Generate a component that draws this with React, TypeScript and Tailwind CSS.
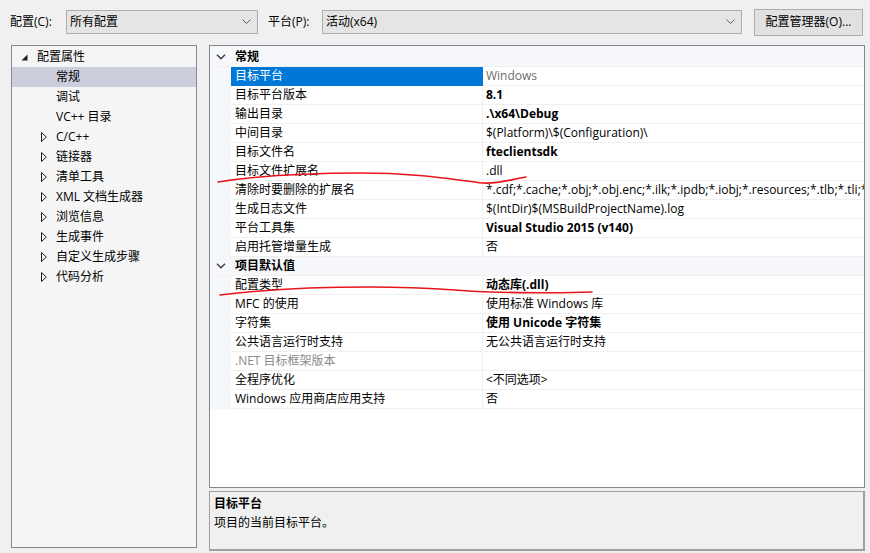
import React from "react";

const FONT = { fontFamily: '"Open Sans", "Noto Sans CJK SC", sans-serif' };

type Row = { name: string; value: string; bold?: boolean; grayValue?: boolean; grayName?: boolean; selected?: boolean };

const general: Row[] = [
  { name: "目标平台", value: "Windows", grayValue: true, selected: true },
  { name: "目标平台版本", value: "8.1", bold: true },
  { name: "输出目录", value: ".\\x64\\Debug", bold: true },
  { name: "中间目录", value: "$(Platform)\\$(Configuration)\\" },
  { name: "目标文件名", value: "fteclientsdk", bold: true },
  { name: "目标文件扩展名", value: ".dll" },
  { name: "清除时要删除的扩展名", value: "*.cdf;*.cache;*.obj;*.obj.enc;*.ilk;*.ipdb;*.iobj;*.resources;*.tlb;*.tli;*.tlh;*.tmp;*.rsp;*.pgc;*.pgd" },
  { name: "生成日志文件", value: "$(IntDir)$(MSBuildProjectName).log" },
  { name: "平台工具集", value: "Visual Studio 2015 (v140)", bold: true },
  { name: "启用托管增量生成", value: "否" },
];

const defaults: Row[] = [
  { name: "配置类型", value: "动态库(.dll)", bold: true },
  { name: "MFC 的使用", value: "使用标准 Windows 库" },
  { name: "字符集", value: "使用 Unicode 字符集", bold: true },
  { name: "公共语言运行时支持", value: "无公共语言运行时支持" },
  { name: ".NET 目标框架版本", value: "", grayName: true },
  { name: "全程序优化", value: "<不同选项>" },
  { name: "Windows 应用商店应用支持", value: "否" },
];

const tree: { label: string; indent: number; kind: "open" | "closed" | "none"; selected?: boolean }[] = [
  { label: "配置属性", indent: 0, kind: "open" },
  { label: "常规", indent: 1, kind: "none", selected: true },
  { label: "调试", indent: 1, kind: "none" },
  { label: "VC++ 目录", indent: 1, kind: "none" },
  { label: "C/C++", indent: 1, kind: "closed" },
  { label: "链接器", indent: 1, kind: "closed" },
  { label: "清单工具", indent: 1, kind: "closed" },
  { label: "XML 文档生成器", indent: 1, kind: "closed" },
  { label: "浏览信息", indent: 1, kind: "closed" },
  { label: "生成事件", indent: 1, kind: "closed" },
  { label: "自定义生成步骤", indent: 1, kind: "closed" },
  { label: "代码分析", indent: 1, kind: "closed" },
];

function Chevron() {
  return (
    <svg width="9" height="6" viewBox="0 0 9 6" className="shrink-0">
      <polyline points="0.5,0.5 4.5,4.5 8.5,0.5" fill="none" stroke="#606060" strokeWidth="1" />
    </svg>
  );
}

function Combo({ text, width }: { text: string; width: string }) {
  return (
    <div className={`${width} h-[24px] flex items-center justify-between bg-[#e5e5e5] border border-[#adadad] pl-[3px] pr-[6px] text-[12px] text-black`}>
      <span>{text}</span>
      <Chevron />
    </div>
  );
}

function CatRow({ label }: { label: string }) {
  return (
    <div className="h-[19px] flex items-center bg-[#f5f7fb] border-b border-[#f0f0f0]">
      <div className="w-[21px] flex justify-center">
        <svg width="10" height="6" viewBox="0 0 10 6">
          <polyline points="1,0.8 5,4.8 9,0.8" fill="none" stroke="#3c3c3c" strokeWidth="1.4" />
        </svg>
      </div>
      <span className="pl-[4px] font-bold text-[12px] text-black">{label}</span>
    </div>
  );
}

function PropRow({ r }: { r: Row }) {
  return (
    <div className="h-[19px] flex">
      <div className="w-[21px] shrink-0 bg-[#f5f7fb]" />
      <div
        className={`w-[252px] shrink-0 flex items-center pl-[4px] border-r border-b ${
          r.selected ? "bg-[#0078d7] text-white border-[#0078d7]" : "border-[#f0f0f0] " + (r.grayName ? "text-[#8a8a8a]" : "text-black")
        } text-[12px] whitespace-nowrap overflow-hidden`}
      >
        {r.name}
      </div>
      <div
        className={`flex-1 min-w-0 flex items-center pl-[3px] border-b border-[#f0f0f0] text-[12px] whitespace-nowrap overflow-hidden ${
          r.bold ? "font-bold" : ""
        } ${r.grayValue ? "text-[#6d6d6d]" : "text-black"}`}
      >
        {r.value}
      </div>
    </div>
  );
}

export default function App() {
  return (
    <div className="w-[870px] h-[553px] bg-[#f0f0f0] relative overflow-hidden text-[12px] text-black" style={FONT}>
      {/* top bar */}
      <div className="h-[45px] flex items-center pl-[10px] pb-[1px]">
        <span className="w-[56px]">配置(C):</span>
        <Combo text="所有配置" width="w-[192px]" />
        <span className="ml-[10px] w-[54px]">平台(P):</span>
        <Combo text="活动(x64)" width="w-[420px]" />
        <div className="ml-[12px] w-[109px] h-[27px] flex items-center justify-center bg-[#e1e1e1] border border-[#adadad]">
          配置管理器(O)...
        </div>
      </div>

      {/* main */}
      <div className="flex pl-[11px]">
        {/* tree */}
        <div className="w-[186px] h-[503px] bg-[#f5f5f5] border border-[#828790] pt-[1px]">
          {tree.map((t) => (
            <div
              key={t.label}
              className={`h-[20px] flex items-center whitespace-nowrap ${t.selected ? "bg-[#cccedb]" : ""}`}
            >
              <div className={`${t.indent === 0 ? "w-[25px]" : "w-[44px]"} flex justify-end pr-[3px]`}>
                {t.kind === "open" && (
                  <svg width="7" height="7" viewBox="0 0 7 7" className="mr-[6px]">
                    <polygon points="6.5,0.5 6.5,6.5 0.5,6.5" fill="#1e1e1e" />
                  </svg>
                )}
                {t.kind === "closed" && (
                  <svg width="6" height="10" viewBox="0 0 6 10" className="mr-[6px]">
                    <polygon points="0.5,0.5 5.3,5 0.5,9.5" fill="none" stroke="#1e1e1e" strokeWidth="1" />
                  </svg>
                )}
              </div>
              <span>{t.label}</span>
            </div>
          ))}
        </div>

        {/* right column */}
        <div className="ml-[12px] w-[656px] flex flex-col">
          <div className="h-[443px] bg-white border border-[#828790] overflow-hidden">
            <div className="h-[2px] bg-[#f5f7fb]" />
            <CatRow label="常规" />
            {general.map((r) => (
              <PropRow key={r.name} r={r} />
            ))}
            <CatRow label="项目默认值" />
            {defaults.map((r) => (
              <PropRow key={r.name} r={r} />
            ))}
          </div>
          <div className="mt-[3px] h-[60px] bg-[#f0f0f0] border border-[#a0a0a0] border-r-2 border-b-2 px-[4px] pt-[3px]">
            <div className="font-bold leading-[18px]">目标平台</div>
            <div className="leading-[20px]">项目的当前目标平台。</div>
          </div>
        </div>
      </div>

      {/* hand-drawn red annotations */}
      <svg className="absolute left-0 top-0 pointer-events-none" width="870" height="553" viewBox="0 0 870 553">
        <path
          d="M218,182 C250,177 300,173 360,173 C420,173 455,180 483,183 C500,184 512,179 526,177"
          fill="none"
          stroke="#e8141c"
          strokeWidth="1.6"
          strokeLinecap="round"
        />
        <path
          d="M220,295 C260,290 310,287 370,287 C430,287 460,291 490,292 C530,293 570,293 592,292"
          fill="none"
          stroke="#e8141c"
          strokeWidth="1.6"
          strokeLinecap="round"
        />
      </svg>
    </div>
  );
}
